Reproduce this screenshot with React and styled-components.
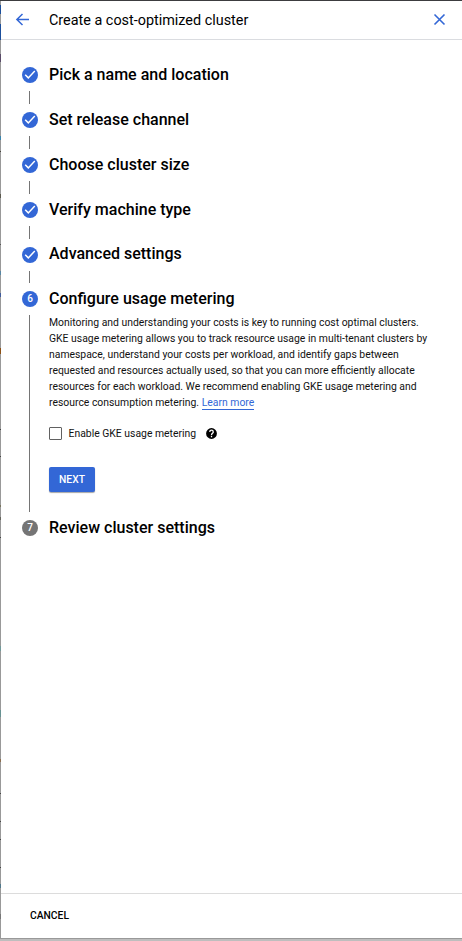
import React from "react";
import styled, { createGlobalStyle } from "styled-components";

const BLUE = "#3367d6";

const GlobalStyle = createGlobalStyle`
  *, *::before, *::after { box-sizing: border-box; }
  body { margin: 0; background: #fff; font-family: Roboto, "Liberation Sans", sans-serif; color: #000; }
  button { font: inherit; margin: 0; padding: 0; border: 0; background: none; cursor: pointer; }
`;

const Window = styled.div`
  display: grid;
  grid-template-columns: 1px 1fr;
  grid-template-rows: 1px 937px 3px;
  width: 462px;
  height: 941px;
  overflow: hidden;
`;

const TopEdge = styled.div`
  grid-column: 1 / -1;
  background: #3c3c3f;
`;

const SideEdge = styled.div`
  display: flex;
  flex-direction: column;
  background: #999;
`;

const Fleck = styled.i`
  flex: none;
  height: ${(p) => p.$h}px;
  margin-top: ${(p) => p.$gap}px;
  background: ${(p) => p.$color};
`;

const BottomEdge = styled.div`
  grid-column: 1 / -1;
  border-top: 1px solid #999;
  background: #bebebe;
`;

const Panel = styled.main`
  display: flex;
  flex-direction: column;
  min-width: 0;
  background: #fff;
`;

const Header = styled.header`
  display: flex;
  align-items: center;
  height: 39px;
  padding: 0 15px 0 14px;
  border-bottom: 1px solid #dadce0;
`;

const IconButton = styled.button`
  display: flex;
  color: ${BLUE};
`;

const Title = styled.h1`
  flex: 1;
  margin: 0 0 0 18px;
  padding-top: 1px;
  font-size: 14.4px;
  font-weight: 400;
  line-height: 20px;
`;

const Steps = styled.ol`
  flex: 1;
  margin: 0;
  padding: 27px 20px 0 21px;
  list-style: none;
`;

const Step = styled.li`
  display: grid;
  grid-template-columns: 16px 1fr;
  column-gap: 11px;
  height: ${(p) => p.$height}px;
`;

const Rail = styled.div`
  display: flex;
  flex-direction: column;
  align-items: center;
`;

const Marker = styled.span`
  display: flex;
  align-items: center;
  justify-content: center;
  flex: none;
  width: 16px;
  height: 16px;
  border-radius: 50%;
  background: ${(p) => (p.$pending ? "#757575" : BLUE)};
  color: #fff;
  font-size: 10px;
  font-weight: 500;
  line-height: 16px;
`;

const Connector = styled.span`
  flex: 1;
  width: 1px;
  margin: 8px 1px 8px 0;
  background: #757575;
`;

const StepBody = styled.div`
  min-width: 0;
`;

const StepTitle = styled.h2`
  margin: ${(p) => p.$shift || 0}px 0 0;
  font-size: 16.03px;
  font-weight: 500;
  line-height: 16px;
  white-space: nowrap;
`;

const Description = styled.p`
  margin: 8px 0 0;
  font-size: 10.4px;
  line-height: 16px;
  color: #111;
  white-space: nowrap;
`;

const Link = styled.a`
  border-bottom: 1px solid ${BLUE};
  color: ${BLUE};
`;

const Option = styled.div`
  display: flex;
  align-items: center;
  height: 13px;
  margin-top: 16px;
  font-size: 10.4px;
  color: #111;
`;

const Checkbox = styled.span`
  width: 13px;
  height: 13px;
  margin-right: 6.5px;
  border: 1px solid #616161;
  border-radius: 1px;
`;

const Help = styled.span`
  display: flex;
  margin-left: 9px;
  color: #000;
`;

const NextButton = styled.button`
  display: block;
  width: 46px;
  height: 25px;
  margin-top: 27px;
  border-radius: 2px;
  background: ${BLUE};
  box-shadow: 0 1px 1px rgba(0, 0, 0, 0.35);
  color: #fff;
  font-size: 10.3px;
  font-weight: 500;
  line-height: 25px;
`;

const Footer = styled.footer`
  display: flex;
  align-items: center;
  height: 45px;
  padding-left: 29px;
  border-top: 1px solid #dcdcdc;
`;

const CancelButton = styled.button`
  font-size: 10.3px;
  font-weight: 500;
  line-height: 16px;
`;

const flecks = [
  [4, 9, "#1c4f9c"], [10, 16, "#1c4f9c"], [14, 8, "#594b68"], [74, 4, "#3a84ad"],
  [11, 1, "#45433b"], [42, 4, "#5b594d"], [46, 1, "#555"], [26, 4, "#5886a3"],
  [18, 4, "#405b9b"], [51, 6, "#8c5015"], [75, 1, "#444"], [26, 1, "#444"],
  [48, 2, "#77745d"], [10, 3, "#66645c"], [17, 1, "#444"], [108, 5, "#70999a"],
  [59, 7, "#679292"], [42, 3, "#8c6e4f"], [31, 1, "#444"], [27, 1, "#444"],
  [17, 1, "#444"], [27, 1, "#444"], [16, 4, "#50788b"], [26, 5, "#777"],
];

const steps = [
  { title: "Pick a name and location", height: 45 },
  { title: "Set release channel", height: 45 },
  { title: "Choose cluster size", height: 45 },
  { title: "Verify machine type", height: 45 },
  { title: "Advanced settings", height: 44, shift: -1 },
  { title: "Configure usage metering", height: 229, number: 6, details: true },
  { title: "Review cluster settings", height: 16, number: 7, pending: true },
];

const BackIcon = () => (
  <svg width="16" height="16" viewBox="0 0 16 16" fill="none" stroke="currentColor" strokeWidth="1.5">
    <path d="M14 7.500H1.800M7.500 2L1.900 7.500l5.600 5.500" />
  </svg>
);

const CloseIcon = () => (
  <svg width="16" height="16" viewBox="0 0 16 16" fill="none" stroke="currentColor" strokeWidth="1.6">
    <path d="M3.500 2.500l10 10M13.500 2.500l-10 10" />
  </svg>
);

const CheckIcon = () => (
  <svg width="16" height="16" viewBox="0 0 16 16" fill="none" stroke="currentColor" strokeWidth="1.5">
    <path d="M3.200 7.800l3.100 3.100 6.500-6.800" />
  </svg>
);

const HelpIcon = () => (
  <svg width="13" height="13" viewBox="0 0 24 24" fill="currentColor">
    <path d="M12 2a10 10 0 1 0 0 20 10 10 0 0 0 0-20zm1.200 17h-2.400v-2.400h2.400V19zm2.300-7.600-1 1c-.9.9-1.300 1.500-1.300 3h-2.400v-.6c0-1.200.5-2.300 1.300-3.100l1.300-1.400c.4-.3.6-.8.6-1.300a2 2 0 0 0-4 0H7.600a4.400 4.400 0 0 1 8.800 0c0 1-.3 1.800-.9 2.400z" />
  </svg>
);

const MeteringDetails = () => (
  <>
    <Description>
      Monitoring and understanding your costs is key to running cost optimal clusters.<br />
      GKE usage metering allows you to track resource usage in multi-tenant clusters by<br />
      namespace, understand your costs per workload, and identify gaps between<br />
      requested and resources actually used, so that you can more efficiently allocate<br />
      resources for each workload. We recommend enabling GKE usage metering and<br />
      resource consumption metering. <Link>Learn more</Link>
    </Description>
    <Option>
      <Checkbox role="checkbox" aria-checked="false" />
      Enable GKE usage metering
      <Help><HelpIcon /></Help>
    </Option>
    <NextButton>NEXT</NextButton>
  </>
);

export default function App() {
  return (
    <>
      <GlobalStyle />
      <Window>
        <TopEdge />
        <SideEdge>
          {flecks.map(([gap, h, color], i) => <Fleck key={i} $gap={gap} $h={h} $color={color} />)}
        </SideEdge>
        <Panel>
          <Header>
            <IconButton aria-label="Back"><BackIcon /></IconButton>
            <Title>Create a cost-optimized cluster</Title>
            <IconButton aria-label="Close"><CloseIcon /></IconButton>
          </Header>
          <Steps>
            {steps.map((s, i) => (
              <Step key={s.title} $height={s.height}>
                <Rail>
                  <Marker $pending={s.pending}>{s.number || <CheckIcon />}</Marker>
                  {i < steps.length - 1 && <Connector />}
                </Rail>
                <StepBody>
                  <StepTitle $shift={s.shift}>{s.title}</StepTitle>
                  {s.details && <MeteringDetails />}
                </StepBody>
              </Step>
            ))}
          </Steps>
          <Footer><CancelButton>CANCEL</CancelButton></Footer>
        </Panel>
        <BottomEdge />
      </Window>
    </>
  );
}
